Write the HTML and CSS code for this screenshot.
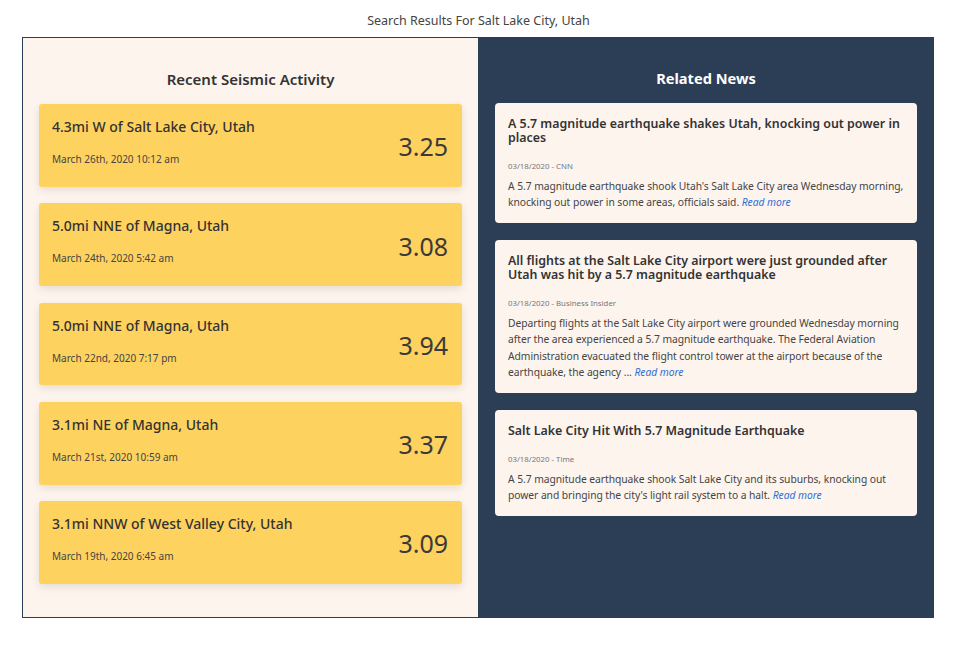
FILE: index.html
```html
<!DOCTYPE html>
<html>
<head>
<meta charset="utf-8">
<link rel="stylesheet" href="styles.css">
</head>
<body>
<header class="page-title">Search Results For Salt Lake City, Utah</header>
<main class="results">
  <section class="col col-quakes">
    <h2 class="col-heading">Recent Seismic Activity</h2>
    <div class="quake">
      <div class="quake-info">
        <div class="quake-place">4.3mi W of Salt Lake City, Utah</div>
        <div class="quake-date">March 26th, 2020 10:12 am</div>
      </div>
      <div class="quake-mag">3.25</div>
    </div>
    <div class="quake">
      <div class="quake-info">
        <div class="quake-place">5.0mi NNE of Magna, Utah</div>
        <div class="quake-date">March 24th, 2020 5:42 am</div>
      </div>
      <div class="quake-mag">3.08</div>
    </div>
    <div class="quake">
      <div class="quake-info">
        <div class="quake-place">5.0mi NNE of Magna, Utah</div>
        <div class="quake-date">March 22nd, 2020 7:17 pm</div>
      </div>
      <div class="quake-mag">3.94</div>
    </div>
    <div class="quake">
      <div class="quake-info">
        <div class="quake-place">3.1mi NE of Magna, Utah</div>
        <div class="quake-date">March 21st, 2020 10:59 am</div>
      </div>
      <div class="quake-mag">3.37</div>
    </div>
    <div class="quake">
      <div class="quake-info">
        <div class="quake-place">3.1mi NNW of West Valley City, Utah</div>
        <div class="quake-date">March 19th, 2020 6:45 am</div>
      </div>
      <div class="quake-mag">3.09</div>
    </div>
  </section>
  <section class="col col-news">
    <h2 class="col-heading light">Related News</h2>
    <article class="news">
      <h3 class="news-title">A 5.7 magnitude earthquake shakes Utah, knocking out power in places</h3>
      <div class="news-meta">03/18/2020 - CNN</div>
      <p class="news-body">A 5.7 magnitude earthquake shook Utah's Salt Lake City area Wednesday morning, knocking out power in some areas, officials said. <a class="read-more" href="#">Read more</a></p>
    </article>
    <article class="news">
      <h3 class="news-title">All flights at the Salt Lake City airport were just grounded after Utah was hit by a 5.7 magnitude earthquake</h3>
      <div class="news-meta">03/18/2020 - Business Insider</div>
      <p class="news-body">Departing flights at the Salt Lake City airport were grounded Wednesday morning after the area experienced a 5.7 magnitude earthquake. The Federal Aviation Administration evacuated the flight control tower at the airport because of the earthquake, the agency ... <a class="read-more" href="#">Read more</a></p>
    </article>
    <article class="news">
      <h3 class="news-title">Salt Lake City Hit With 5.7 Magnitude Earthquake</h3>
      <div class="news-meta">03/18/2020 - Time</div>
      <p class="news-body">A 5.7 magnitude earthquake shook Salt Lake City and its suburbs, knocking out power and bringing the city's light rail system to a halt. <a class="read-more" href="#">Read more</a></p>
    </article>
  </section>
</main>
</body>
</html>
```

FILE: styles.css
```css
* { box-sizing: border-box; }
html, body { margin: 0; padding: 0; background: #fff; }
body {
  font-family: "Noto Sans", "Open Sans", sans-serif;
  color: #333;
}
.page-title {
  text-align: center;
  font-size: 12.5px;
  color: #444;
  height: 37px;
  line-height: 41px;
}
.results {
  margin: 0 23px 0 22px;
  border: 1px solid #2c3e55;
  display: grid;
  grid-template-columns: 455px 455px;
  height: 581px;
}
.col {
  padding: 29px 16px 0 16px;
  display: flex;
  flex-direction: column;
  gap: 16.5px;
}
.col-quakes { background: #fdf4ee; }
.col-news { background: #2c3e55; padding: 28px 16px 0 17px; gap: 16.7px; }
.col-heading {
  margin: 0 0 -1.5px 0;
  text-align: center;
  font-size: 15px;
  font-weight: 600;
  color: #333;
  line-height: 24px;
  height: 22px;
}
.col-heading.light { color: #fff; font-weight: 700; font-size: 14.6px; margin-bottom: -2px; }
.quake {
  background: #fed25f;
  border-radius: 3px;
  box-shadow: 0 3px 8px rgba(0,0,0,0.10);
  height: 82.75px;
  padding: 12px 14px 10px 13px;
  display: flex;
  justify-content: space-between;
  align-items: center;
}
.quake-info { align-self: flex-start; }
.quake-place {
  font-size: 14px;
  font-weight: 500;
  line-height: 22px;
  color: #333;
}
.quake-date {
  font-size: 10px;
  line-height: 14px;
  margin-top: 14px;
  color: #444;
}
.quake-mag {
  font-size: 25px;
  color: #3a3a3a;
  margin-top: 0;
}
.news {
  background: #fdf4ee;
  border-radius: 4px;
  padding: 14px 13px 13px 13px;
}
.news-title {
  margin: 0;
  font-size: 12.4px;
  font-weight: 600;
  line-height: 14px;
  color: #333;
}
.news-meta {
  font-size: 7.8px;
  color: #777;
  margin-top: 16px;
}
.news-body {
  margin: 7px 0 0 0;
  font-size: 10.3px;
  letter-spacing: -0.05px;
  line-height: 16.3px;
  color: #444;
}
.read-more {
  color: #2f6fd6;
  font-style: italic;
  text-decoration: none;
}
```
